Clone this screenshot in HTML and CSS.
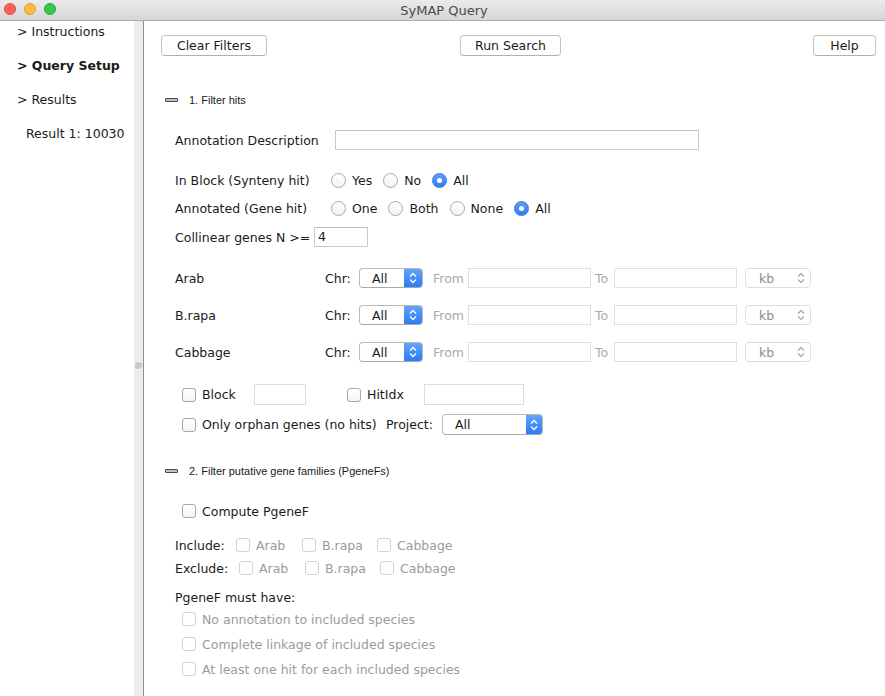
FILE: index.html
```html
<!DOCTYPE html>
<html>
<head>
<meta charset="utf-8">
<title>SyMAP Query</title>
<link rel="stylesheet" href="styles.css">
</head>
<body>
<div class="window">
  <div class="titlebar">
    <div class="lights">
      <span class="light red"></span>
      <span class="light yellow"></span>
      <span class="light green"></span>
    </div>
    <div class="title">SyMAP Query</div>
  </div>
  <div class="body">
    <nav class="sidebar">
      <div class="nav-item">&gt; Instructions</div>
      <div class="nav-item bold">&gt; Query Setup</div>
      <div class="nav-item">&gt; Results</div>
      <div class="nav-item sub">Result 1: 10030</div>
    </nav>
    <div class="divider"><span class="grip"></span></div>
    <main class="content">
      <div class="toolbar">
        <button class="btn btn-clear">Clear Filters</button>
        <button class="btn btn-run">Run Search</button>
        <button class="btn btn-help">Help</button>
      </div>

      <div class="section-head h1"><span class="dash"></span><span>1. Filter hits</span></div>

      <div class="row r-annot">
        <span class="lbl w-annot">Annotation Description</span>
        <span class="input i-annot"></span>
      </div>

      <div class="row r-block">
        <span class="lbl w-radio">In Block (Synteny hit)</span>
        <span class="opt"><span class="radio"></span>Yes</span>
        <span class="opt"><span class="radio"></span>No</span>
        <span class="opt"><span class="radio on"></span>All</span>
      </div>

      <div class="row r-annotated">
        <span class="lbl w-radio">Annotated (Gene hit)</span>
        <span class="opt"><span class="radio"></span>One</span>
        <span class="opt"><span class="radio"></span>Both</span>
        <span class="opt"><span class="radio"></span>None</span>
        <span class="opt"><span class="radio on"></span>All</span>
      </div>

      <div class="row r-coll">
        <span class="lbl w-coll">Collinear genes N &gt;=</span>
        <span class="input i-coll">4</span>
      </div>

      <div class="row r-sp1">
        <span class="lbl w-sp">Arab</span>
        <span class="lbl w-chr">Chr:</span>
        <span class="select sel-chr"><span class="sel-val">All</span><span class="sel-btn"><svg width="8" height="12" viewBox="0 0 8 12"><path d="M1 4.5 L4 1.5 L7 4.5 M1 7.5 L4 10.5 L7 7.5" fill="none" stroke="#fff" stroke-width="1.3"/></svg></span></span>
        <span class="lbl dim w-from">From</span>
        <span class="input dis i-range"></span>
        <span class="lbl dim w-to">To</span>
        <span class="input dis i-range"></span>
        <span class="select sel-kb"><span class="sel-val">kb</span><svg class="kb-chev" width="8" height="12" viewBox="0 0 8 12"><path d="M1 4.5 L4 1.5 L7 4.5 M1 7.5 L4 10.5 L7 7.5" fill="none" stroke="#a0a0a0" stroke-width="1.1"/></svg></span>
      </div>

      <div class="row r-sp">
        <span class="lbl w-sp">B.rapa</span>
        <span class="lbl w-chr">Chr:</span>
        <span class="select sel-chr"><span class="sel-val">All</span><span class="sel-btn"><svg width="8" height="12" viewBox="0 0 8 12"><path d="M1 4.5 L4 1.5 L7 4.5 M1 7.5 L4 10.5 L7 7.5" fill="none" stroke="#fff" stroke-width="1.3"/></svg></span></span>
        <span class="lbl dim w-from">From</span>
        <span class="input dis i-range"></span>
        <span class="lbl dim w-to">To</span>
        <span class="input dis i-range"></span>
        <span class="select sel-kb"><span class="sel-val">kb</span><svg class="kb-chev" width="8" height="12" viewBox="0 0 8 12"><path d="M1 4.5 L4 1.5 L7 4.5 M1 7.5 L4 10.5 L7 7.5" fill="none" stroke="#a0a0a0" stroke-width="1.1"/></svg></span>
      </div>

      <div class="row r-sp">
        <span class="lbl w-sp">Cabbage</span>
        <span class="lbl w-chr">Chr:</span>
        <span class="select sel-chr"><span class="sel-val">All</span><span class="sel-btn"><svg width="8" height="12" viewBox="0 0 8 12"><path d="M1 4.5 L4 1.5 L7 4.5 M1 7.5 L4 10.5 L7 7.5" fill="none" stroke="#fff" stroke-width="1.3"/></svg></span></span>
        <span class="lbl dim w-from">From</span>
        <span class="input dis i-range"></span>
        <span class="lbl dim w-to">To</span>
        <span class="input dis i-range"></span>
        <span class="select sel-kb"><span class="sel-val">kb</span><svg class="kb-chev" width="8" height="12" viewBox="0 0 8 12"><path d="M1 4.5 L4 1.5 L7 4.5 M1 7.5 L4 10.5 L7 7.5" fill="none" stroke="#a0a0a0" stroke-width="1.1"/></svg></span>
      </div>

      <div class="row r-blk indent">
        <span class="check"></span>
        <span class="lbl w-blk">Block</span>
        <span class="input i-blk"></span>
        <span class="check ml-hit"></span>
        <span class="lbl w-hit">HitIdx</span>
        <span class="input i-hit"></span>
      </div>

      <div class="row r-orph indent">
        <span class="check"></span>
        <span class="lbl w-orph">Only orphan genes (no hits)</span>
        <span class="lbl w-proj">Project:</span>
        <span class="select sel-proj"><span class="sel-val">All</span><span class="sel-btn"><svg width="8" height="12" viewBox="0 0 8 12"><path d="M1 4.5 L4 1.5 L7 4.5 M1 7.5 L4 10.5 L7 7.5" fill="none" stroke="#fff" stroke-width="1.3"/></svg></span></span>
      </div>

      <div class="section-head h2"><span class="dash"></span><span>2. Filter putative gene families (PgeneFs)</span></div>

      <div class="row r-comp indent">
        <span class="check"></span>
        <span class="lbl">Compute PgeneF</span>
      </div>

      <div class="row r-inc">
        <span class="lbl w-inc">Include:</span>
        <span class="copt w-o1"><span class="check dis"></span>Arab</span>
        <span class="copt w-o2"><span class="check dis"></span>B.rapa</span>
        <span class="copt"><span class="check dis"></span>Cabbage</span>
      </div>

      <div class="row r-exc">
        <span class="lbl w-exc">Exclude:</span>
        <span class="copt w-o1"><span class="check dis"></span>Arab</span>
        <span class="copt w-o2"><span class="check dis"></span>B.rapa</span>
        <span class="copt"><span class="check dis"></span>Cabbage</span>
      </div>

      <div class="row r-must">
        <span class="lbl">PgeneF must have:</span>
      </div>

      <div class="row r-m1 indent dimrow">
        <span class="check dis"></span>
        <span class="lbl">No annotation to included species</span>
      </div>
      <div class="row r-m2 indent dimrow">
        <span class="check dis"></span>
        <span class="lbl">Complete linkage of included species</span>
      </div>
      <div class="row r-m2 indent dimrow">
        <span class="check dis"></span>
        <span class="lbl">At least one hit for each included species</span>
      </div>
    </main>
  </div>
</div>
</body>
</html>
```

FILE: styles.css
```css
* { box-sizing: border-box; }
html, body {
  margin: 0;
  padding: 0;
  width: 885px;
  height: 696px;
  overflow: hidden;
  background: #ffffff;
  font-family: "DejaVu Sans", "Noto Sans", sans-serif;
  font-size: 12.5px;
  color: #1a1a1a;
}
.window {
  width: 885px;
  height: 696px;
  display: flex;
  flex-direction: column;
}
.titlebar {
  height: 21px;
  flex: none;
  display: flex;
  align-items: center;
  justify-content: center;
  background: linear-gradient(#ebebeb, #d6d6d6);
  border-bottom: 1px solid #adadad;
  position: relative;
}
.lights {
  position: absolute;
  left: 4px;
  top: 3px;
  display: flex;
  gap: 8px;
}
.light {
  width: 12px;
  height: 12px;
  border-radius: 50%;
  display: block;
}
.red { background: #fc605c; border: 1px solid #de4a45; }
.yellow { background: #fdbc40; border: 1px solid #de9e2a; }
.green { background: #34c84a; border: 1px solid #24a93a; }
.title {
  font-size: 13px;
  color: #4b4b4b;
  margin-left: 3px;
}
.body {
  flex: 1;
  display: flex;
  min-height: 0;
}
.sidebar {
  width: 134px;
  flex: none;
  padding-top: 3px;
  background: #fff;
}
.nav-item {
  height: 34px;
  line-height: 16px;
  padding-left: 17px;
  white-space: nowrap;
}
.nav-item.bold { font-weight: bold; }
.nav-item.sub { padding-left: 26px; }
.divider {
  width: 10px;
  flex: none;
  background: #ececec;
  border-right: 1px solid #8f8f8f;
  display: flex;
  flex-direction: column;
  align-items: center;
}
.grip {
  margin-top: 341px;
  width: 7px;
  height: 7px;
  border-radius: 50%;
  background: #c8c8c8;
  box-shadow: 0 -3px 0 -2px #fff, 0 3px 0 -2px #fff;
  margin-left: -1px;
}
.content {
  flex: 1;
  padding-top: 14px;
  min-width: 0;
}
.toolbar {
  display: flex;
  padding-left: 17px;
  padding-right: 9px;
  height: 21px;
}
.btn {
  height: 21px;
  padding: 0;
  font-family: inherit;
  font-size: 12.5px;
  color: #1a1a1a;
  background: #fff;
  border: 1px solid #c4c4c4;
  border-bottom-color: #b0b0b0;
  border-radius: 4px;
  line-height: 19px;
}
.btn-clear { width: 106px; }
.btn-run { width: 101px; margin-left: 193px; }
.btn-help { width: 63px; margin-left: auto; }

.section-head {
  display: flex;
  align-items: center;
  height: 12px;
  padding-left: 21px;
  font-family: "Liberation Sans", Arial, sans-serif;
  font-size: 11px;
  color: #1a1a1a;
}
.dash {
  width: 13px;
  height: 4px;
  background: #bcc0d9;
  border: 1px solid #4a4a4a;
  border-radius: 1px;
  margin-right: 11px;
}
.h1 { margin-top: 38px; }
.h2 { margin-top: 30px; }

.row {
  display: flex;
  align-items: center;
  height: 20px;
  padding-left: 31px;
  white-space: nowrap;
}
.row.indent { padding-left: 38px; }
.lbl { display: inline-block; flex: none; }
.dim { color: #a9a9a9; }

.r-annot { margin-top: 24px; }
.r-block { margin-top: 20px; }
.r-annotated { margin-top: 8px; }
.r-coll { margin-top: 9px; }
.r-sp1 { margin-top: 21px; }
.r-sp { margin-top: 17px; }
.r-blk { margin-top: 22px; height: 21px; }
.r-orph { margin-top: 9px; height: 21px; }
.r-comp { margin-top: 24px; }
.r-inc { margin-top: 14px; }
.r-exc { margin-top: 3px; }
.r-must { margin-top: 9px; }
.r-m1 { margin-top: 2px; }
.r-m2 { margin-top: 5px; }

.w-annot { width: 160px; }
.w-radio { width: 156px; }
.w-coll { width: 139px; }
.w-sp { width: 150px; }
.w-chr { width: 34px; }
.w-from { width: 35px; margin-left: 10px; }
.w-to { width: 19px; margin-left: 4px; }
.w-blk { width: 52px; }
.ml-hit { margin-left: 41px; }
.w-hit { width: 57px; }
.w-orph { width: 184px; }
.w-proj { width: 56px; }
.w-inc { width: 61px; }
.w-exc { width: 64px; }
.w-o1 { width: 66px; }
.w-o2 { width: 75px; }

.input {
  display: inline-block;
  flex: none;
  height: 20px;
  border: 1px solid #c9c9c9;
  border-top-color: #bdbdbd;
  background: #fff;
  line-height: 18px;
  padding-left: 3px;
}
.input.dis { border-color: #dfdfdf; }
.i-annot { width: 364px; }
.i-coll { width: 54px; }
.i-range { width: 123px; }
.i-blk { width: 52px; height: 21px; border-color: #dcdcdc; }
.i-hit { width: 100px; height: 21px; border-color: #dcdcdc; }

.opt {
  display: flex;
  align-items: center;
  margin-right: 11px;
}
.radio {
  width: 15px;
  height: 15px;
  border-radius: 50%;
  border: 1px solid #a9a9a9;
  background: linear-gradient(#ffffff, #f3f3f3);
  margin-right: 6px;
  display: flex;
  align-items: center;
  justify-content: center;
}
.radio.on {
  background: linear-gradient(#5d9ff9, #2f7df6);
  border-color: #3279e6;
}
.radio.on::after {
  content: "";
  width: 5px;
  height: 5px;
  border-radius: 50%;
  background: #fff;
}

.check {
  width: 14px;
  height: 14px;
  border: 1px solid #a7a7a7;
  border-radius: 3px;
  background: linear-gradient(#ffffff, #f4f4f4);
  margin-right: 6px;
  flex: none;
}
.check.dis { border-color: #d3d3d3; background: #fff; }
.copt {
  display: flex;
  align-items: center;
  color: #9b9b9b;
  flex: none;
}
.dimrow .lbl { color: #9b9b9b; }

.select {
  display: flex;
  flex: none;
  align-items: center;
  height: 20px;
  border: 1px solid #b9b9b9;
  border-bottom-color: #a9a9a9;
  border-radius: 4px;
  background: #fff;
  overflow: hidden;
}
.sel-val { flex: 1; padding-left: 12px; }
.sel-btn {
  width: 18px;
  height: 100%;
  background: linear-gradient(#63a4fa, #2c7bf5);
  display: flex;
  align-items: center;
  justify-content: center;
}
.sel-chr { width: 64px; }
.sel-proj { width: 101px; height: 21px; }
.sel-proj .sel-btn { width: 16px; }
.sel-kb {
  width: 66px;
  margin-left: 8px;
  border-color: #dedede;
  color: #8c8c8c;
  padding-right: 5px;
}
.sel-kb .sel-val { padding-left: 13px; }
```
